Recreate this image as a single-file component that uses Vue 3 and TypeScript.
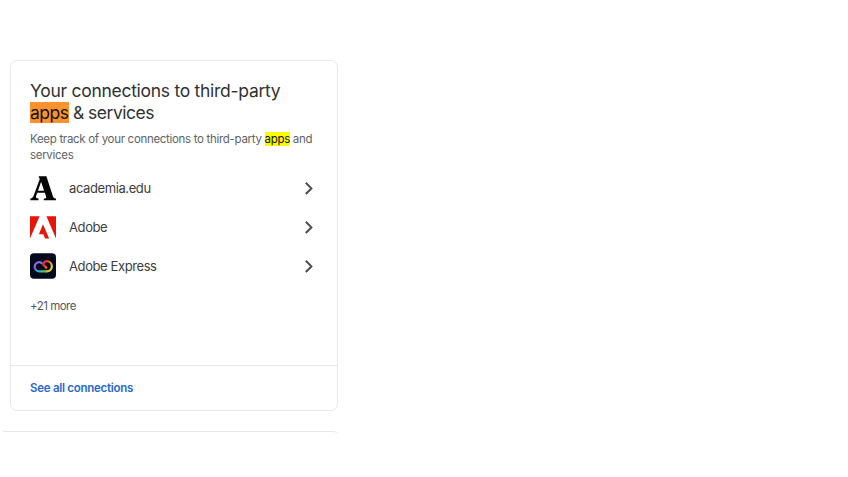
<script setup lang="ts">
interface Connection {
  name: string
  icon: 'academia' | 'adobe' | 'express'
}

const connections: Connection[] = [
  { name: 'academia.edu', icon: 'academia' },
  { name: 'Adobe', icon: 'adobe' },
  { name: 'Adobe Express', icon: 'express' },
]
</script>

<template>
  <main class="page">
    <section class="card">
      <div class="content">
        <h2 class="title">
          <span class="title-first">Your connections to third-party</span><br />
          <span class="title-second"><mark class="current">apps</mark> &amp; services</span>
        </h2>
        <p class="description">
          Keep track of your connections to third-party <mark>apps</mark> and<br />services
        </p>
        <ul class="list">
          <li v-for="item in connections" :key="item.name" :class="['row', item.icon]">
            <svg v-if="item.icon === 'academia'" class="logo" viewBox="0 0 26 26">
              <path
                fill="#050505"
                fill-rule="evenodd"
                d="M8.8 1.2h7.6l6.6 20.2c.5 1.3 1.1 1.8 2.9 2.1v1.7H13.8v-1.7c2.3-.2 2.7-.7 2.3-2.1l-1.2-3.6H7.2l-1.1 3.1c-.5 1.6.1 2.3 2.4 2.6v1.7H.4v-1.7c1.8-.4 2.6-1.2 3.3-3.1L9.7 4.3C9.5 3.2 9.4 2.9 8.8 2.8zM11.1 6.8 8 15.8H14.1z"
              />
            </svg>
            <svg v-else-if="item.icon === 'adobe'" class="logo" viewBox="0 0 26 26">
              <path fill="#e91408" d="M0 2.2h9.6L0 24.6zM16.4 2.2H26v22.4zM13 10.3 19.1 24.6h-4l-1.8-4.4H8.9z" />
            </svg>
            <svg v-else class="logo" viewBox="0 0 26 26">
              <defs>
                <linearGradient id="ring-left" gradientUnits="userSpaceOnUse" x1="5" y1="8" x2="17" y2="18">
                  <stop offset="0" stop-color="#c05be0" />
                  <stop offset=".3" stop-color="#6f6cf0" />
                  <stop offset=".55" stop-color="#20b4d4" />
                  <stop offset="1" stop-color="#55d646" />
                </linearGradient>
                <linearGradient id="ring-right" gradientUnits="userSpaceOnUse" x1="9" y1="12" x2="20" y2="18">
                  <stop offset="0" stop-color="#df3296" />
                  <stop offset=".4" stop-color="#f52b28" />
                  <stop offset=".75" stop-color="#ff972b" />
                  <stop offset="1" stop-color="#d9df30" />
                </linearGradient>
              </defs>
              <rect y=".3" width="26" height="25.4" rx="4" fill="#020a1c" />
              <g fill="none" stroke-width="2.2" stroke-linecap="round">
                <path
                  stroke="url(#ring-left)"
                  d="M11.6 10.2C11 9.5 10.2 9.2 9.3 9.2a4.6 4.6 0 0 0 0 9.2h7"
                />
                <path
                  stroke="url(#ring-right)"
                  d="M16.2 14.6 13.6 12c-.5-.5-.6-1.1-.1-1.8 1-1.3 2-2 3.2-2a5.1 5.1 0 0 1 0 10.2"
                />
              </g>
            </svg>
            <span class="name">{{ item.name }}</span>
            <svg class="chevron" viewBox="0 0 10 14">
              <path d="m1.8 1.8 5.6 5.6-5.6 5.6" fill="none" stroke="#4a4b4d" stroke-width="2" />
            </svg>
          </li>
        </ul>
        <div class="more">+21 more</div>
      </div>
      <footer class="footer"><a class="link">See all connections</a></footer>
    </section>
    <div class="next-card"></div>
  </main>
</template>

<style>
body {
  background: #fff;
}
</style>

<style scoped>
.page {
  box-sizing: border-box;
  width: 848px;
  height: 477px;
  padding: 60px 0 0 10px;
  overflow: hidden;
  font-family: Inter, sans-serif;
  color: #3c4043;
}
.card {
  box-sizing: border-box;
  display: flex;
  flex-direction: column;
  width: 328px;
  height: 351px;
  border: 1px solid #e7e8e9;
  border-radius: 7px;
}
.content {
  flex: 1;
  padding: 19px 23px 0 19px;
}
.title {
  margin: 0;
  font-size: 17.5px;
  font-weight: 400;
  line-height: 22px;
  color: #303235;
  white-space: nowrap;
}
.title-first {
  letter-spacing: -0.28px;
}
.title-second {
  letter-spacing: -0.5px;
}
mark {
  background: #fbfb05;
  color: #111;
}
.current {
  background: #fc922e;
}
.description {
  margin: 7px 0 0;
  font-size: 11.5px;
  line-height: 16px;
  letter-spacing: -0.31px;
  color: #606367;
  white-space: nowrap;
}
.list {
  margin: 6px 0 0;
  padding: 0;
  list-style: none;
}
.row {
  display: flex;
  align-items: center;
  height: 38.8px;
}
.logo {
  width: 26px;
  height: 26px;
  flex: none;
}
.name {
  flex: 1;
  margin-left: 13px;
  font-size: 13px;
  line-height: 20px;
  letter-spacing: -0.4px;
}
.chevron {
  width: 10px;
  height: 14px;
}
.more {
  margin-top: 13px;
  font-size: 11.5px;
  line-height: 16px;
  letter-spacing: -0.5px;
  color: #55585b;
}
.footer {
  display: flex;
  align-items: center;
  box-sizing: border-box;
  height: 45px;
  padding-left: 19px;
  border-top: 1px solid #e7e8e9;
}
.link {
  font-size: 11.5px;
  font-weight: 600;
  letter-spacing: -0.27px;
  color: #286acb;
}
.next-card {
  box-sizing: border-box;
  width: 336px;
  height: 3px;
  margin: 20px 0 0 -7px;
  border-top: 1px solid #e7e8e9;
  border-top-right-radius: 7px 3px;
}
</style>
